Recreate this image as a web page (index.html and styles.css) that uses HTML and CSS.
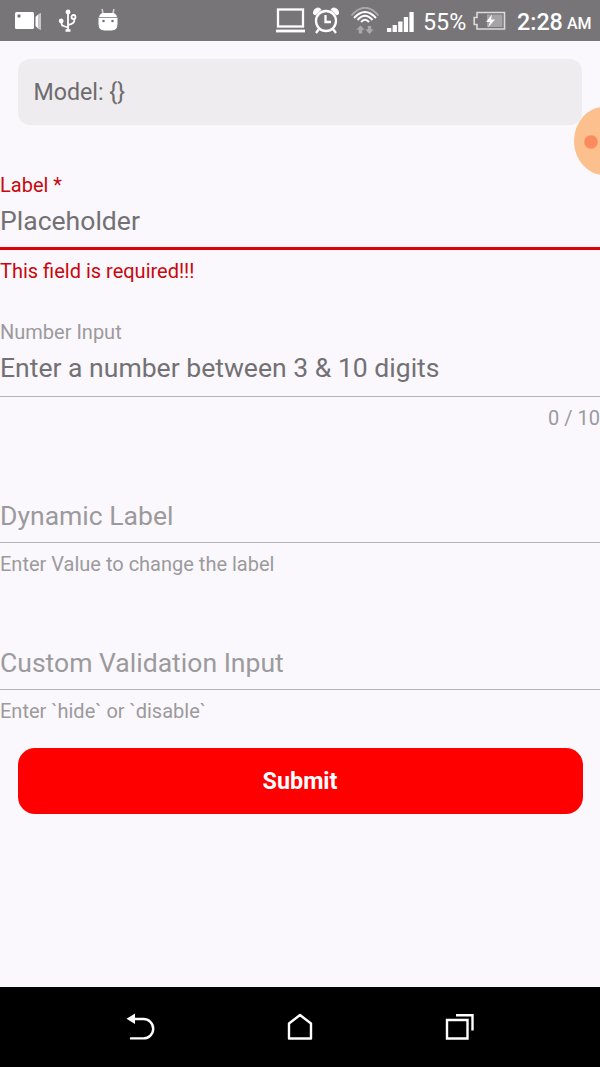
FILE: index.html
```html
<!DOCTYPE html>
<html lang="en">
<head>
<meta charset="utf-8">
<title>Form</title>
<link rel="stylesheet" href="styles.css">
</head>
<body>
<div class="screen">
  <header class="status">
    <svg class="ico camera" width="28" height="20" viewBox="0 0 28 20"><rect x="1" y="1" width="19" height="17" rx="1.5" fill="#fff"/><path d="M21.500 6l3-3v15l-3-3z" fill="#fff"/><path d="M24.500 3l2.500-1v17l-2.500-1z" fill="#c9c7ca"/><circle cx="5" cy="5" r="1.7" fill="#777578"/></svg>
    <svg class="ico usb" width="20" height="24" viewBox="0 0 20 24" fill="none" stroke="#fff" stroke-width="1.800"><path d="M10 3v18M3.500 12v2.500q0 2 2 2.500l4.500 1.500M16 9.500q2 5-6 6.500"/><circle cx="10" cy="3" r="1.500" fill="#fff"/><circle cx="3.200" cy="12" r="1.500" fill="#fff"/><circle cx="15.500" cy="8" r="2"/><path d="M7.500 21.500h5" stroke-width="2.500"/></svg>
    <svg class="ico droid" width="22" height="26" viewBox="0 0 22 26"><path d="M6.500 8L5 2M15.500 8L17 2" stroke="#d0ced0" stroke-width="1.600"/><path d="M1.500 10.800h19V17q0 6.500-6 6.500h-7q-6 0-6-6.500z" fill="#fff"/><path d="M2 9.900q1-3.900 4.500-3.900h9q3.500 0 4.500 3.900z" fill="#fff"/><circle cx="6.500" cy="14" r="1.300" fill="#777578"/><circle cx="15.500" cy="14" r="1.300" fill="#777578"/></svg>
    <svg class="ico laptop" width="31" height="26" viewBox="0 0 31 26" fill="none" stroke="#fff"><rect x="3" y="2.500" width="25" height="17" stroke-width="2.300"/><path d="M1 24h29" stroke-width="2.800"/></svg>
    <svg class="ico alarm" width="28" height="28" viewBox="0 0 28 28" fill="none" stroke="#fff" stroke-width="2.300"><circle cx="14" cy="15" r="10"/><path d="M13.500 9v7h5.500M7 23l-3 4M21 23l3 4"/><path d="M1.500 8Q1 2 7 2l2 1.500-5.500 5.500zM26.500 8Q27 2 21 2l-2 1.500 5.500 5.500z" fill="#fff" stroke-width="1"/></svg>
    <svg class="ico wifi" width="30" height="28" viewBox="0 0 30 28" fill="none" stroke="#fff" stroke-width="1.900"><path d="M1.500 8.500Q15-7 28.500 8.500" stroke="#a9a7aa"/><path d="M4 11Q15-1 26 11M7.500 13Q15 4.500 22.500 13M11 15Q15 10.500 19 15"/><path d="M10.500 18.500l4.200 4.300h-2.500V26.500H8.800v-3.700H6.300zM19.500 27L15.300 22.500h2.500v-3.500h3.400v3.500h2.500z" fill="#aaa8ab" stroke="none"/></svg>
    <svg class="ico bars" width="27" height="22" viewBox="0 0 27 22" fill="#fff"><path d="M0 17h4.300v4H0zM5.600 14h4.300v7H5.600zM11.200 10.500h4.300V21h-4.300zM16.800 6h4.300v15h-4.300zM22.400 1h4.300v20h-4.300z"/></svg>
    <span class="percent">55%</span>
    <svg class="ico battery" width="33" height="20" viewBox="0 0 33 20"><path d="M4 1.500h27.500v16.500H4V13.500H1.200V6.500H4z" fill="none" stroke="#dcdadd" stroke-width="1.600"/><path d="M14 3.500h15.500V16H14z" fill="#a5a3a6"/><path d="M19 3.500L13 11h4l-2 5.500 7-8h-4z" fill="#fff"/></svg>
    <span class="time">2:28</span><span class="ampm">AM</span>
  </header>
  <main class="content">
    <div class="model">Model: {}</div>
    <div class="bubble"></div>
    <form class="form">
      <div class="field error">
        <div class="label">Label *</div>
        <div class="value">Placeholder</div>
        <div class="helper">This field is required!!!</div>
      </div>
      <div class="field">
        <div class="label">Number Input</div>
        <div class="value">Enter a number between 3 &amp; 10 digits</div>
        <div class="helper counter">0 / 10</div>
      </div>
      <div class="field">
        <div class="label"></div>
        <div class="value resting">Dynamic Label</div>
        <div class="helper">Enter Value to change the label</div>
      </div>
      <div class="field">
        <div class="label"></div>
        <div class="value resting">Custom Validation Input</div>
        <div class="helper">Enter `hide` or `disable`</div>
      </div>
    </form>
    <button class="submit" type="button">Submit</button>
  </main>
  <nav class="nav">
    <svg width="32" height="30" viewBox="0 0 32 30" fill="none" stroke="#fff" stroke-width="2.400"><path d="M9 7h10.500a9.700 9.700 0 0 1 0 19.400H7" stroke-linecap="round"/><path d="M2.500 6.800L11 1.500v10.500z" fill="#fff" stroke="none"/></svg>
    <svg width="32" height="30" viewBox="0 0 32 30" fill="none" stroke="#fff" stroke-width="2.400" stroke-linejoin="round"><path d="M5 11.500L16 3l11 8.500v15H5z"/></svg>
    <svg width="32" height="30" viewBox="0 0 32 30" fill="none" stroke="#fff" stroke-width="2.400"><path d="M3 8h20.500v18.500H3zM12 3.200h16.500V18.500"/></svg>
  </nav>
</div>
</body>
</html>
```
FILE: styles.css
```css
body {
  margin: 0;
  font-family: Roboto, "Liberation Sans", sans-serif;
  background: #faf8fc;
}
.screen {
  display: flex;
  flex-direction: column;
  width: 600px;
  height: 1067px;
  overflow: hidden;
}
.status {
  display: flex;
  align-items: flex-start;
  flex: none;
  height: 41px;
  box-sizing: border-box;
  padding-left: 14px;
  background: #777578;
  color: #fff;
  line-height: 28px;
  white-space: nowrap;
}
.ico { flex: none; }
.camera { margin-top: 11px; }
.usb { margin: 9px 0 0 16px; }
.droid { margin: 7px 0 0 19px; }
.laptop { margin: 7px 0 0 156px; }
.alarm { margin: 6px 0 0 6px; }
.wifi { margin: 7px 0 0 10px; }
.bars { margin: 11px 0 0 7px; }
.percent {
  width: 44px;
  margin: 8px 0 0 9px;
  font-size: 23.3px;
}
.battery { margin: 11px 0 0 6px; }
.time {
  width: 46px;
  margin: 8px 0 0 11px;
  font-size: 23.3px;
  font-weight: 500;
}
.ampm {
  margin: 10px 0 0 4px;
  font-size: 16px;
  font-weight: 500;
}
.content {
  position: relative;
  flex: 1;
  padding-top: 18px;
}
.model {
  height: 66px;
  margin: 0 18px;
  padding-left: 15.5px;
  box-sizing: border-box;
  border-radius: 12px;
  background: #eeecef;
  color: #6d6b6e;
  font-size: 23.2px;
  line-height: 66px;
}
/* Floating touch handle docked against the right edge */
.bubble {
  position: absolute;
  top: 66px;
  left: 574px;
  width: 60px;
  height: 68px;
  border-radius: 50%;
  background: radial-gradient(circle at 17px 35px, #fa8b5f 6px, transparent 7.5px), #fcc08e;
}
.form { margin-top: 48px; }
.field {
  height: 146.7px;
  color: #9c9a9d;
  font-size: 20px;
  line-height: 24px;
}
.label { height: 24px; }
.value {
  height: 36px;
  padding-top: 8px;
  border-bottom: 1px solid #b5b3b6;
  padding-bottom: 8px;
  margin-bottom: 9px;
  color: #737174;
  font-size: 26.55px;
  line-height: 32px;
  white-space: nowrap;
}
.resting {
  height: 34px;
  padding-top: 10px;
  color: #9c9a9d;
}
.error { color: #c9070c; }
.error .value {
  height: 34px;
  border-bottom: 3px solid #dc0308;
}
.counter { text-align: right; }
.submit {
  display: block;
  width: 565px;
  height: 66px;
  margin: -12px 0 0 17.5px;
  padding: 0;
  border: 0;
  border-radius: 17px;
  background: #f00;
  color: #fff;
  font: bold 23.33px Roboto, "Liberation Sans", sans-serif;
}
.nav {
  display: flex;
  align-items: center;
  justify-content: center;
  gap: 128px;
  flex: none;
  height: 80px;
  background: #000;
}
```
